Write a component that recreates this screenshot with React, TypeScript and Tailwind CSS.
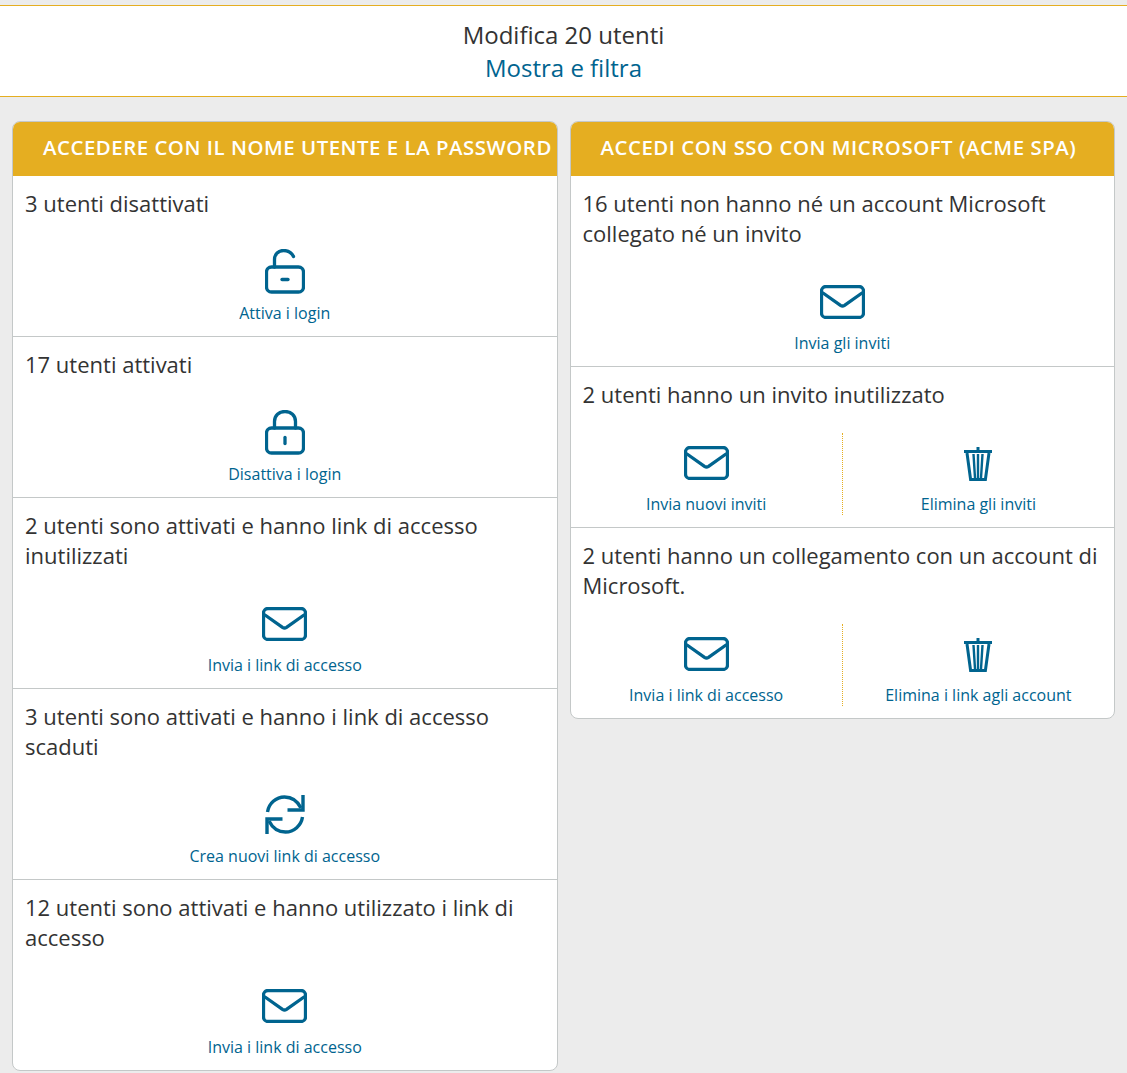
const blue = "#00648f";

function Lock({ open }: { open?: boolean }) {
  return (
    <svg width="40" height="45" viewBox="0 0 40 45" fill="none" stroke={blue} strokeWidth="3.3" strokeLinecap="round" strokeLinejoin="round">
      <rect x="1.5" y="18" width="37" height="25" rx="5" />
      {open ? (
        <path d="M9.5 18V10.5C9.5 5.2 13.5 1.5 18.5 1.5C23 1.5 26.8 3.8 28.5 7.5" />
      ) : (
        <path d="M9.5 18V11.5C9.5 5.5 14 1.5 20 1.5C26 1.5 30.5 5.5 30.5 11.5V18" />
      )}
      {open ? <path d="M17 30.5H23" /> : <path d="M20 27.5V33.5" />}
    </svg>
  );
}

function Mail() {
  return (
    <svg width="45" height="34" viewBox="0 0 45 34" fill="none" stroke={blue} strokeWidth="3.3" strokeLinecap="round" strokeLinejoin="round">
      <rect x="1.5" y="1.5" width="42" height="31" rx="4.5" />
      <path d="M3 8L20.5 20.3C21.7 21.1 23.3 21.1 24.5 20.3L42 8" />
    </svg>
  );
}

function Refresh() {
  return (
    <svg width="40" height="39" viewBox="0 0 40 39" fill="none" stroke={blue} strokeWidth="3.4" strokeLinejoin="miter">
      <path d="M2.5 17C3.8 8.5 11 2 19.5 2C26.5 2 32.5 6 36 13" />
      <path d="M38 0V15H22.5" />
      <path d="M37.5 22C36.2 30.5 29 37 20.5 37C13.5 37 7.5 33 4 26" />
      <path d="M2 39V24H17.5" />
    </svg>
  );
}

function Trash() {
  return (
    <svg width="28" height="34" viewBox="0 0 28 34" fill="none" stroke={blue} className="mt-[2px]">
      <path d="M0 4.5H28" strokeWidth="3" />
      <path d="M12.5 3V0H15.5V3Z" fill={blue} strokeWidth="0" />
      <path d="M3 6L6.6 32.5H21.4L25 6" strokeWidth="3" />
      <path d="M9.5 7L11 31M14 7V31M18.5 7L17 31" strokeWidth="2.4" />
    </svg>
  );
}

type Act = { icon: React.ReactNode; label: string };

function Row({ text, actions }: { text: string; actions: Act[] }) {
  return (
    <div className="border-b border-[#c4c8c8] last:border-b-0 px-3 pt-[12px] pb-[12px]">
      <p className="text-[22px] leading-[30px] text-[#333333]">{text}</p>
      <div className="flex mt-[24px]">
        {actions.map((a, i) => (
          <div
            key={a.label}
            className={
              "flex-1 h-[82px] flex flex-col items-center " +
              (actions.length === 2 ? (i === 0 ? "pr-[12px]" : "pl-[12px] border-l border-dotted border-[#e5ae21]") : "")
            }
          >
            <div className="h-[59px] shrink-0 flex items-center justify-center">{a.icon}</div>
            <span className="mt-px text-[16px] leading-[22px] text-[#00648f]">{a.label}</span>
          </div>
        ))}
      </div>
    </div>
  );
}

function Card({ title, indent, children }: { title: string; indent: string; children: React.ReactNode }) {
  return (
    <div className="flex-1 min-w-0 self-start bg-white border border-[#c4c8c8] rounded-[8px] overflow-hidden">
      <div className={"h-[54px] bg-[#e5ae21] flex items-center whitespace-nowrap text-white font-semibold text-[20.4px] tracking-[0.52px] pb-[4px] " + indent}>
        {title}
      </div>
      {children}
    </div>
  );
}

export default function App() {
  return (
    <div className="min-h-[1073px] bg-[#ececec] pt-[5px]" style={{ fontFamily: '"Open Sans", sans-serif' }}>
      <header className="h-[92px] bg-white border-y border-[#e5ae21] flex flex-col items-center pt-[12px] text-[24px] leading-[33px]">
        <div className="text-[#333333]">Modifica 20 utenti</div>
        <div className="text-[#00648f]">Mostra e filtra</div>
      </header>
      <main className="flex gap-[12px] px-[12px] pt-[24px]">
        <Card title="ACCEDERE CON IL NOME UTENTE E LA PASSWORD" indent="pl-[30px]">
          <Row text="3 utenti disattivati" actions={[{ icon: <Lock open />, label: "Attiva i login" }]} />
          <Row text="17 utenti attivati" actions={[{ icon: <Lock />, label: "Disattiva i login" }]} />
          <Row text="2 utenti sono attivati e hanno link di accesso inutilizzati" actions={[{ icon: <Mail />, label: "Invia i link di accesso" }]} />
          <Row text="3 utenti sono attivati e hanno i link di accesso scaduti" actions={[{ icon: <Refresh />, label: "Crea nuovi link di accesso" }]} />
          <Row text="12 utenti sono attivati e hanno utilizzato i link di accesso" actions={[{ icon: <Mail />, label: "Invia i link di accesso" }]} />
        </Card>
        <Card title="ACCEDI CON SSO CON MICROSOFT (ACME SPA)" indent="pl-[30px]">
          <Row text="16 utenti non hanno né un account Microsoft collegato né un invito" actions={[{ icon: <Mail />, label: "Invia gli inviti" }]} />
          <Row text="2 utenti hanno un invito inutilizzato" actions={[{ icon: <Mail />, label: "Invia nuovi inviti" }, { icon: <Trash />, label: "Elimina gli inviti" }]} />
          <Row text="2 utenti hanno un collegamento con un account di Microsoft." actions={[{ icon: <Mail />, label: "Invia i link di accesso" }, { icon: <Trash />, label: "Elimina i link agli account" }]} />
        </Card>
      </main>
    </div>
  );
}
